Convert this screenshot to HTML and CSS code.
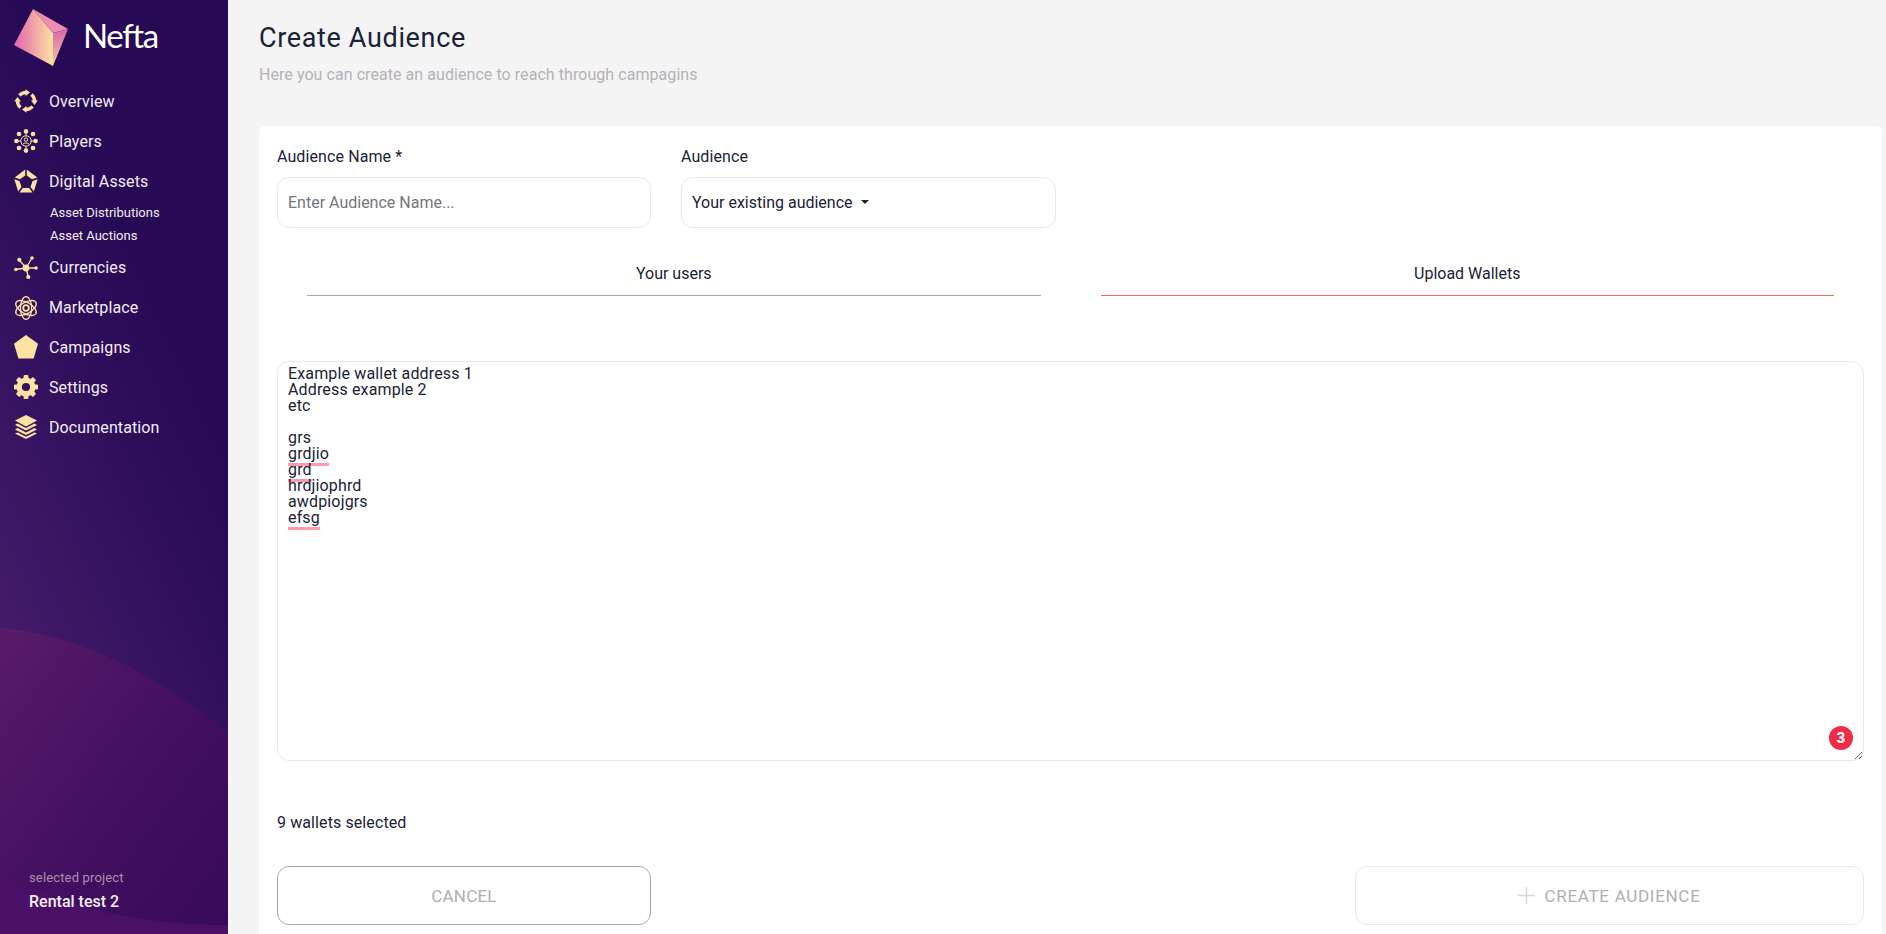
FILE: index.html
```html
<!DOCTYPE html>
<html lang="en">
<head>
<meta charset="utf-8">
<title>Create Audience</title>
<link rel="stylesheet" href="styles.css">
</head>
<body>
<aside class="sidebar">
  <svg class="waves" viewBox="0 0 228 934" preserveAspectRatio="none" aria-hidden="true">
    <defs>
      <linearGradient id="waveFill" x1="0" y1="0" x2="1" y2="1">
        <stop offset="0" stop-color="#581b69"/>
        <stop offset="0.55" stop-color="#430f60"/>
        <stop offset="1" stop-color="#360a5a"/>
      </linearGradient>
    </defs>
    <path d="M0 628C66 632 150 668 228 733V934H0Z" fill="url(#waveFill)"/>
    <path d="M0 874C60 906 140 925 228 925V934H0Z" fill="#4a0f66"/>
  </svg>
  <div class="brand">
    <svg class="gem" viewBox="0 0 80 75" aria-hidden="true">
      <defs>
        <linearGradient id="gemA" x1="0" y1="0" x2="1" y2="0">
          <stop offset="0" stop-color="#e263ad"/>
          <stop offset="1" stop-color="#fde1a0"/>
        </linearGradient>
        <linearGradient id="gemB" x1="0" y1="0" x2="1" y2="1">
          <stop offset="0" stop-color="#ef8bb0"/>
          <stop offset="1" stop-color="#e98fb5"/>
        </linearGradient>
        <linearGradient id="gemC" x1="0" y1="0" x2="0" y2="1">
          <stop offset="0" stop-color="#d867ab"/>
          <stop offset="1" stop-color="#f6c79f"/>
        </linearGradient>
      </defs>
      <path d="M33 9L53 33V66L14 45Z" fill="url(#gemA)"/>
      <path d="M33 9L68 29L53 33Z" fill="url(#gemB)"/>
      <path d="M53 33L68 29L53 66Z" fill="url(#gemC)"/>
    </svg>
    <span class="wordmark">Nefta</span>
  </div>
  <nav class="nav">
    <a class="nav-item">
      <svg class="icon" viewBox="0 0 24 24" aria-hidden="true">
        <defs>
          <g id="arrowArc">
            <path d="M5.5 6.5A8.5 8.5 0 0 1 12 3.5" fill="none" stroke="#fde2a1" stroke-width="3.4"/>
            <path d="M11.5 0.2L16 3.5L11.5 7Z" fill="#fde2a1"/>
          </g>
        </defs>
        <use href="#arrowArc"/>
        <use href="#arrowArc" transform="rotate(90 12 12)"/>
        <use href="#arrowArc" transform="rotate(180 12 12)"/>
        <use href="#arrowArc" transform="rotate(270 12 12)"/>
      </svg>
      <span>Overview</span>
    </a>
    <a class="nav-item">
      <svg class="icon" viewBox="0 0 24 24" aria-hidden="true">
        <g fill="#fde2a1">
          <circle cx="12" cy="2.4" r="2.3"/><circle cx="12" cy="21.6" r="2.3"/><circle cx="2.4" cy="12" r="2.3"/><circle cx="21.6" cy="12" r="2.3"/>
          <circle cx="5" cy="5" r="2.3"/><circle cx="19" cy="5" r="2.3"/><circle cx="5" cy="19" r="2.3"/><circle cx="19" cy="19" r="2.3"/>
        </g>
        <g stroke="#fde2a1" stroke-width="1" fill="none">
          <path d="M12 4V7M12 17V20M4 12H7M17 12H20"/>
          <circle cx="12" cy="12" r="5.2"/><circle cx="12" cy="10.6" r="1.7"/><path d="M8.8 15.6C9.2 13.4 14.8 13.4 15.2 15.6"/>
        </g>
      </svg>
      <span>Players</span>
    </a>
    <a class="nav-item">
      <svg class="icon" viewBox="0 0 24 24" aria-hidden="true">
        <path fill="#fde2a1" d="M11.2 0.4V6.5L6 10.3L0.7 8.6ZM12.8 0.4V6.5L18 10.3L23.3 8.6ZM0.3 10.2L5.5 11.9L7.5 18L4.2 22.5ZM23.7 10.2L18.5 11.9L16.5 18L19.8 22.5ZM5.5 23.6L8.8 19H15.2L18.5 23.6Z"/>
      </svg>
      <span>Digital Assets</span>
    </a>
    <ul class="subnav">
      <li>Asset Distributions</li>
      <li>Asset Auctions</li>
    </ul>
    <a class="nav-item">
      <svg class="icon" viewBox="0 0 24 24" aria-hidden="true">
        <g stroke="#fde2a1" stroke-width="1.3"><path d="M12 12L5.3 3.8M12 12L18 2M12 12L22 12M12 12L14.3 21M12 12L1.5 13.5"/></g>
        <g fill="#fde2a1"><circle cx="12" cy="12" r="3.4"/><circle cx="5.3" cy="3.8" r="2.1"/><circle cx="18" cy="2" r="1.8"/><circle cx="22" cy="12" r="1.8"/><circle cx="14.3" cy="21" r="2.1"/><circle cx="1.8" cy="13.5" r="1.8"/></g>
      </svg>
      <span>Currencies</span>
    </a>
    <a class="nav-item">
      <svg class="icon" viewBox="0 0 24 24" aria-hidden="true">
        <g fill="none" stroke="#fde2a1" stroke-width="1.3">
          <ellipse cx="12" cy="12" rx="5.6" ry="11.4"/>
          <ellipse cx="12" cy="12" rx="5.6" ry="11.4" transform="rotate(60 12 12)"/>
          <ellipse cx="12" cy="12" rx="5.6" ry="11.4" transform="rotate(120 12 12)"/>
          <circle cx="12" cy="12" r="2.8" stroke-width="1.8"/>
        </g>
      </svg>
      <span>Marketplace</span>
    </a>
    <a class="nav-item">
      <svg class="icon" viewBox="0 0 24 24" aria-hidden="true">
        <path fill="#fde2a1" d="M12 0L24 8.8L19.6 23.5H4.4L0 8.8Z"/>
      </svg>
      <span>Campaigns</span>
    </a>
    <a class="nav-item">
      <svg class="icon" viewBox="0 0 24 24" aria-hidden="true">
        <circle cx="12" cy="12" r="6.8" fill="none" stroke="#fde2a1" stroke-width="5.4"/>
        <g fill="#fde2a1">
          <rect x="9.6" y="0" width="4.8" height="5" rx="1"/>
          <rect x="9.6" y="0" width="4.8" height="5" rx="1" transform="rotate(45 12 12)"/>
          <rect x="9.6" y="0" width="4.8" height="5" rx="1" transform="rotate(90 12 12)"/>
          <rect x="9.6" y="0" width="4.8" height="5" rx="1" transform="rotate(135 12 12)"/>
          <rect x="9.6" y="0" width="4.8" height="5" rx="1" transform="rotate(180 12 12)"/>
          <rect x="9.6" y="0" width="4.8" height="5" rx="1" transform="rotate(225 12 12)"/>
          <rect x="9.6" y="0" width="4.8" height="5" rx="1" transform="rotate(270 12 12)"/>
          <rect x="9.6" y="0" width="4.8" height="5" rx="1" transform="rotate(315 12 12)"/>
        </g>
      </svg>
      <span>Settings</span>
    </a>
    <a class="nav-item">
      <svg class="icon" viewBox="0 0 24 24" aria-hidden="true">
        <path fill="#fde2a1" d="M12 0L23 5.6L12 11.4L1 5.6Z"/>
        <path fill="#fde2a1" d="M3.6 8.6L12 13L20.4 8.6L23 10L12 15.6L1 10ZM3.6 13L12 17.4L20.4 13L23 14.4L12 20L1 14.4ZM3.6 17.4L12 21.8L20.4 17.4L23 18.6L12 24L1 18.6Z"/>
      </svg>
      <span>Documentation</span>
    </a>
  </nav>
  <div class="project">
    <div class="project-label">selected project</div>
    <div class="project-name">Rental test 2</div>
  </div>
</aside>

<main class="main">
  <header class="page-head">
    <h1 class="page-title">Create Audience</h1>
    <p class="page-sub">Here you can create an audience to reach through campagins</p>
  </header>
  <section class="card">
    <div class="fields">
      <div class="field">
        <label class="label">Audience Name *</label>
        <div class="control placeholder">Enter Audience Name...</div>
      </div>
      <div class="field">
        <label class="label">Audience</label>
        <div class="control">Your existing audience<span class="caret"></span></div>
      </div>
    </div>
    <div class="tabs">
      <div class="tab">Your users</div>
      <div class="tab tab-active">Upload Wallets</div>
    </div>
    <div class="wallet-wrap">
      <div class="wallets">Example wallet address 1
Address example 2
etc

grs
<span class="misspelt">grdjio</span>
<span class="misspelt">grd</span>
hrdjiophrd
awdpiojgrs
<span class="misspelt">efsg</span></div>
      <span class="badge">3</span>
    </div>
    <p class="count">9 wallets selected</p>
    <div class="actions">
      <button class="btn btn-cancel">CANCEL</button>
      <button class="btn btn-create">
        <svg class="plus" viewBox="0 0 17 17" aria-hidden="true"><path d="M8.5 0V17M0 8.5H17" stroke="#dcd8db" stroke-width="1.4"/></svg>
        CREATE AUDIENCE
      </button>
    </div>
  </section>
</main>
</body>
</html>
```

FILE: styles.css
```css
* { box-sizing: border-box; }

html, body {
  margin: 0;
  height: 100%;
  overflow: hidden;
}

body {
  display: flex;
  background: #f4f4f5;
  color: #1a2238;
  font-family: Roboto, "Liberation Sans", sans-serif;
  font-size: 16px;
  letter-spacing: 0.1px;
}

.sidebar {
  position: relative;
  flex: 0 0 228px;
  height: 934px;
  display: flex;
  flex-direction: column;
  background: linear-gradient(65deg, #4c1f70 0%, #421a68 23%, #2b0d59 58%, #270a55 70%, #270a55 100%);
  color: #f3edf6;
}

.waves {
  position: absolute;
  inset: 0;
  width: 100%;
  height: 100%;
}

.brand {
  position: relative;
  height: 81.6px;
  display: flex;
  align-items: flex-start;
}

.gem {
  width: 80px;
  height: 75px;
  flex: none;
}

.wordmark {
  margin: 11px 0 0 3px;
  font-family: Lato, sans-serif;
  font-weight: 400;
  font-size: 33px;
  line-height: 48px;
  letter-spacing: -1.4px;
  color: #fff;
}

.nav {
  position: relative;
  display: flex;
  flex-direction: column;
}

.nav-item {
  height: 39.8px;
  padding-left: 14px;
  display: flex;
  align-items: center;
  gap: 11px;
  font-size: 16px;
}

.icon {
  width: 24px;
  height: 24px;
  flex: none;
}

.subnav {
  list-style: none;
  margin: 0;
  padding: 0 0 0 50px;
  font-size: 13px;
  line-height: 23.5px;
  letter-spacing: 0;
}

.project {
  position: relative;
  margin-top: auto;
  padding: 0 0 22px 29px;
}

.project-label {
  font-size: 13px;
  line-height: 18px;
  letter-spacing: 0.15px;
  color: #a591ad;
}

.project-name {
  margin-top: 5px;
  font-size: 16px;
  font-weight: 500;
  line-height: 20px;
  letter-spacing: 0;
  color: #f6f0f8;
}

.main {
  flex: 1;
  min-width: 0;
  padding: 0 4px 0 31px;
}

.page-head {
  height: 126px;
  padding-top: 21px;
}

.page-title {
  margin: 0;
  font-size: 27px;
  font-weight: 400;
  line-height: 34px;
  letter-spacing: 0.65px;
  color: #1a2238;
}

.page-sub {
  margin: 9px 0 0;
  font-size: 16px;
  line-height: 22px;
  letter-spacing: 0.06px;
  color: #b7b0b9;
}

.card {
  padding: 19px 18px 0;
  height: 808px;
  background: #fff;
  border-radius: 6px 6px 0 0;
}

.fields {
  display: grid;
  grid-template-columns: 374px 375px;
  column-gap: 30px;
}

.label {
  display: block;
  margin-bottom: 8px;
  line-height: 24px;
  color: #1a2238;
}

.control {
  height: 51px;
  padding: 0 10px;
  display: flex;
  align-items: center;
  border: 1px solid #e9e9ec;
  border-radius: 12px;
  letter-spacing: 0;
}

.placeholder {
  color: #74757d;
}

.caret {
  margin-left: 8px;
  border-top: 4.8px solid #1a2238;
  border-left: 4.8px solid transparent;
  border-right: 4.8px solid transparent;
  transform: translateY(-1px);
}

.tabs {
  display: grid;
  grid-template-columns: 1fr 1fr;
  margin-top: 34px;
}

.tab {
  margin: 0 30px;
  height: 34px;
  line-height: 24px;
  text-align: center;
  letter-spacing: 0;
  border-bottom: 1px solid #aea6ac;
}

.tab.tab-active {
  border-bottom: 1px solid #f2675c;
}

.wallet-wrap {
  position: relative;
  margin-top: 65px;
}

.wallets {
  height: 400px;
  width: 100%;
  padding: 4px 10px;
  border: 1px solid #e9e9ec;
  border-radius: 12px;
  font-size: 16px;
  line-height: 16px;
  letter-spacing: 0.15px;
  white-space: pre;
  overflow: auto;
  resize: vertical;
}

.misspelt {
  text-decoration: underline;
  text-decoration-color: #ff9aab;
  text-decoration-thickness: 2.5px;
  text-underline-offset: 4px;
  text-decoration-skip-ink: none;
}

.badge {
  position: absolute;
  right: 11px;
  bottom: 11px;
  width: 24px;
  height: 24px;
  border-radius: 50%;
  display: flex;
  align-items: center;
  justify-content: center;
  background: #ef2b45;
  color: #fff;
  font-size: 15px;
  font-weight: 900;
}

.count {
  margin: 50px 0 0;
  line-height: 24px;
}

.actions {
  display: flex;
  justify-content: space-between;
  margin-top: 31px;
}

.btn {
  height: 59px;
  background: #fff;
  border-radius: 12px;
  font-family: inherit;
  font-size: 17px;
  letter-spacing: 0.2px;
  color: #b3adb3;
  display: flex;
  align-items: center;
  justify-content: center;
  gap: 9px;
}

.btn-cancel {
  width: 374px;
  border: 1px solid #b0a8ae;
}

.btn-create {
  width: 509px;
  border: 1px solid #e9e9ec;
  letter-spacing: 0.7px;
}

.plus {
  width: 17px;
  height: 17px;
}
```
